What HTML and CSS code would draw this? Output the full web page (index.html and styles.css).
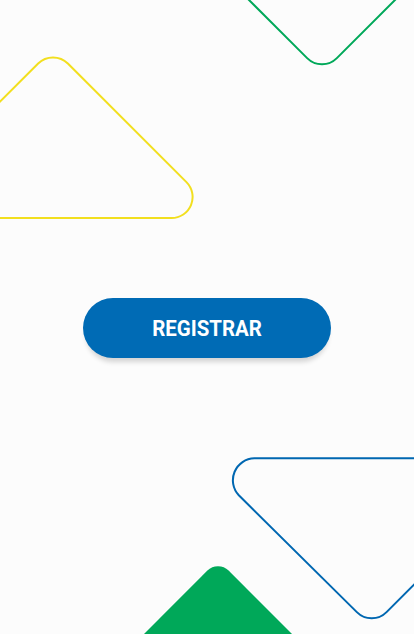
FILE: index.html
```html
<!DOCTYPE html>
<html lang="es">
<head>
<meta charset="utf-8">
<title>Registrar</title>
<link rel="stylesheet" href="styles.css">
</head>
<body>
<div class="screen">
  <svg class="decor" width="414" height="634" viewBox="0 0 414 634" aria-hidden="true">
    <path class="yellow" d="M 38.15 63.55 A 21 21 0 0 1 67.85 63.55 L 186.45 182.15 A 21 21 0 0 1 171.6 218 L -65.6 218 A 21 21 0 0 1 -80.45 182.15 Z"/>
    <path class="green-line" d="M 240 -9 L 307.15 58.15 A 21 21 0 0 0 336.85 58.15 L 413 -18" />
    <path class="blue" d="M 600 458.3 L 254.4 458.3 A 22 22 0 0 0 238.8 495.3 L 356.85 612.15 A 21 21 0 0 0 386.55 612.15 L 600 398.7"/>
    <path class="green-fill" d="M 138 640 L 207.4 570.6 A 15 15 0 0 1 228.6 570.6 L 298 640 Z"/>
  </svg>
  <main class="content">
    <button class="btn" type="button"><span class="btn-label">REGISTRAR</span></button>
  </main>
</div>
</body>
</html>
```
FILE: styles.css
```css
html, body {
  margin: 0;
  padding: 0;
}
body {
  background: #fcfcfc;
  font-family: Roboto, "Liberation Sans", Arial, sans-serif;
}
.screen {
  position: relative;
  width: 414px;
  height: 634px;
  overflow: hidden;
}
.decor {
  position: absolute;
  left: 0;
  top: 0;
}
.decor path {
  fill: none;
  stroke-width: 2;
}
.decor .yellow {
  stroke: #f2df1f;
}
.decor .green-line {
  stroke: #00a859;
}
.decor .blue {
  stroke: #0067b1;
}
.decor .green-fill {
  fill: #00a859;
  stroke: none;
}
.content {
  position: relative;
  display: flex;
  justify-content: center;
  padding-top: 298px;
}
.btn {
  width: 248px;
  height: 60px;
  border: none;
  border-radius: 30px;
  background: #006bb5;
  color: #ffffff;
  font-family: Roboto, "Liberation Sans", Arial, sans-serif;
  font-weight: 700;
  font-size: 22px;
  box-shadow: 0 7px 5px -3px rgba(0, 0, 0, 0.16);
  cursor: pointer;
  padding: 0;
  display: flex;
  align-items: center;
  justify-content: center;
}
.btn-label {
  display: inline-block;
  transform: scaleX(0.93);
  margin-top: 1px;
}
```
